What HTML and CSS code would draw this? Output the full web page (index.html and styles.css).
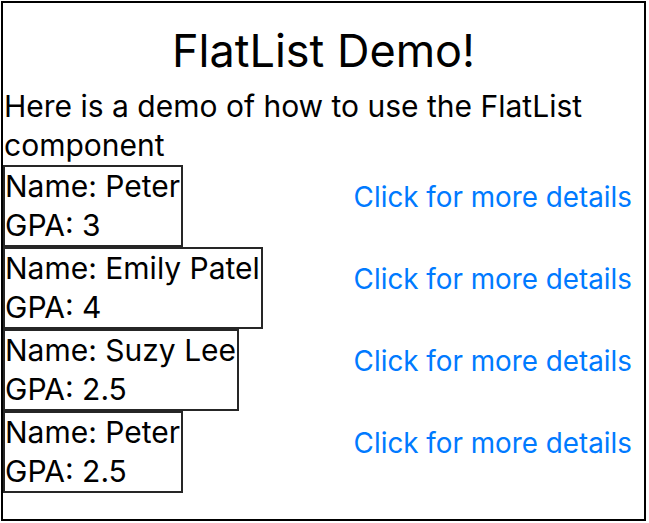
FILE: index.html
```html
<!DOCTYPE html>
<html>
<head>
<meta charset="utf-8">
<link rel="stylesheet" href="styles.css">
</head>
<body>
<div class="frame">
  <h1 class="title">FlatList Demo!</h1>
  <p class="intro">Here is a demo of how to use the FlatList component</p>
  <ul class="list">
    <li class="row">
      <div class="card"><div class="line">Name: Peter</div><div class="line">GPA: 3</div></div>
      <a class="link" href="#">Click for more details</a>
    </li>
    <li class="row">
      <div class="card"><div class="line">Name: Emily Patel</div><div class="line">GPA: 4</div></div>
      <a class="link" href="#">Click for more details</a>
    </li>
    <li class="row">
      <div class="card"><div class="line">Name: Suzy Lee</div><div class="line">GPA: 2.5</div></div>
      <a class="link" href="#">Click for more details</a>
    </li>
    <li class="row">
      <div class="card"><div class="line">Name: Peter</div><div class="line">GPA: 2.5</div></div>
      <a class="link" href="#">Click for more details</a>
    </li>
  </ul>
</div>
</body>
</html>
```
FILE: styles.css
```css
* { box-sizing: border-box; }
html, body { margin: 0; padding: 0; background: #fff; }
body {
  font-family: Inter, "Liberation Sans", sans-serif;
  color: #000;
}
.frame {
  margin: 1px 0 0 1px;
  width: 645px;
  height: 520px;
  border: 2px solid #000;
  overflow: hidden;
}
.title {
  margin: 20px 0 8px;
  font-size: 45px;
  font-weight: 400;
  line-height: 56px;
  text-align: center;
}
.intro {
  margin: 0;
  padding-left: 1px;
  font-size: 30px;
  line-height: 39px;
}
.list {
  list-style: none;
  margin: 0;
  padding: 0;
}
.row {
  display: flex;
  justify-content: space-between;
  align-items: flex-start;
}
.card {
  border: 2px solid #262626;
  padding: 0 1px 0 0;
  font-size: 30px;
  line-height: 39px;
}
.link {
  color: #007aff;
  text-decoration: none;
  font-size: 27.8px;
  line-height: 39px;
  padding-top: 13px;
  padding-right: 12px;
}
```
